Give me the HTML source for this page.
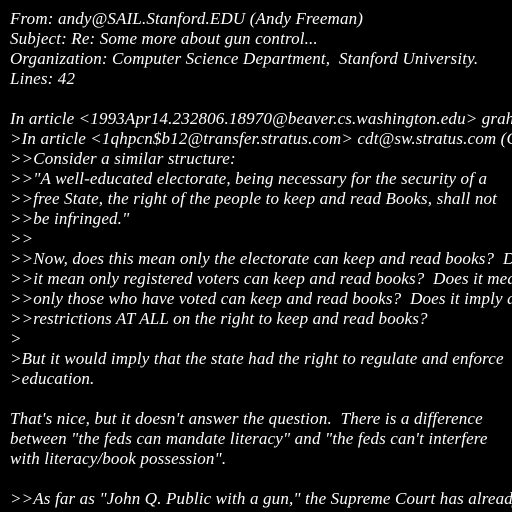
<!DOCTYPE html>
<html><head><style>
body{margin:0;background:#000;width:512px;height:512px;overflow:hidden}
pre{margin:0;position:absolute;left:10px;top:9px;color:#fff;font-family:"Liberation Serif",serif;font-style:italic;font-size:17px;line-height:20px;letter-spacing:0.15px;white-space:pre}
</style></head><body><pre>From: andy@SAIL.Stanford.EDU (Andy Freeman)
Subject: Re: Some more about gun control...
Organization: Computer Science Department,  Stanford University.
Lines: 42

In article &lt;1993Apr14.232806.18970@beaver.cs.washington.edu&gt; graham@cs.washington.edu
&gt;In article &lt;1qhpcn$b12@transfer.stratus.com&gt; cdt@sw.stratus.com (C. D. Tavares)
&gt;&gt;Consider a similar structure:
&gt;&gt;"A well-educated electorate, being necessary for the security of a
&gt;&gt;free State, the right of the people to keep and read Books, shall not
&gt;&gt;be infringed."
&gt;&gt;
&gt;&gt;Now, does this mean only the electorate can keep and read books?  Does
&gt;&gt;it mean only registered voters can keep and read books?  Does it mean
&gt;&gt;only those who have voted can keep and read books?  Does it imply any
&gt;&gt;restrictions AT ALL on the right to keep and read books?
&gt;
&gt;But it would imply that the state had the right to regulate and enforce
&gt;education.

That's nice, but it doesn't answer the question.  There is a difference
between "the feds can mandate literacy" and "the feds can't interfere
with literacy/book possession".

&gt;&gt;As far as "John Q. Public with a gun," the Supreme Court has already
</pre></body></html>
